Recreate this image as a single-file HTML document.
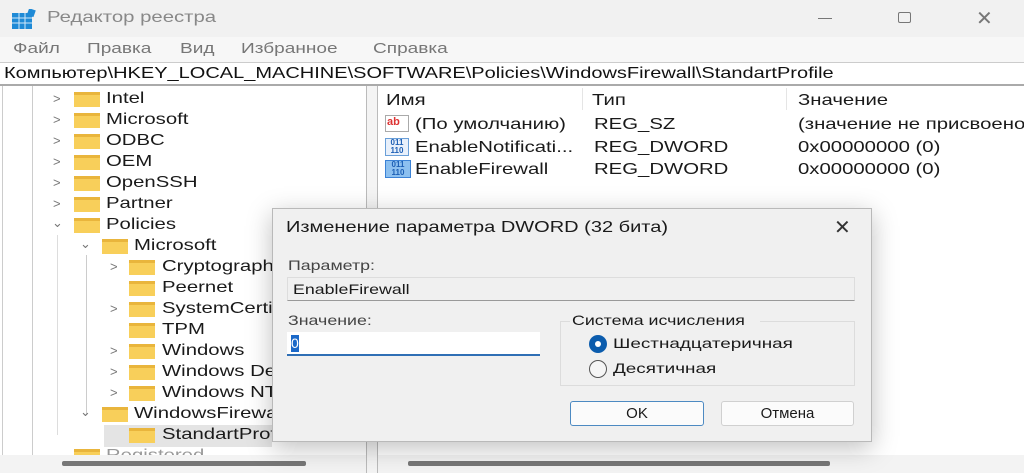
<!DOCTYPE html>
<html><head><meta charset="utf-8"><style>
*{margin:0;padding:0;box-sizing:border-box}
body{width:1024px;height:473px;overflow:hidden;background:#fff;font-family:"Liberation Sans","DejaVu Sans",sans-serif;color:#1a1a1a;position:relative}
.a{position:absolute;white-space:nowrap}
.x{transform:scaleX(1.27);transform-origin:0 0}
.t{font-size:16px}
.fold{position:absolute;width:26px;height:15px;background:#f8cf5a;border-top:3px solid #e9b53c}
.chev{position:absolute;font-size:13px;color:#777}
</style></head><body>
<!-- title -->
<div class="a" style="left:0;top:0;width:1024px;height:37px;background:#f1f1f1"></div>
<svg class="a" style="left:12px;top:9px" width="24" height="20"><rect x="0" y="4" width="20" height="16" fill="#1f8ad6"/><g stroke="#cfe8fa" stroke-width="1"><line x1="0" y1="9" x2="20" y2="9"/><line x1="0" y1="14" x2="20" y2="14"/><line x1="7" y1="4" x2="7" y2="20"/><line x1="13" y1="4" x2="13" y2="20"/></g><rect x="16" y="0" width="7" height="7" fill="#1f8ad6" transform="rotate(20 19 3)"/></svg>
<div class="a x" style="left:47px;top:9px;font-size:16px;color:#888">Редактор реестра</div>
<div class="a" style="left:818px;top:18px;width:14px;height:1px;background:#777"></div>
<div class="a" style="left:898px;top:12px;width:13px;height:11px;border:1px solid #777;border-radius:2px"></div>
<div class="a" style="left:976px;top:6px;font-size:20px;color:#777">✕</div>
<!-- menu -->
<div class="a" style="left:0;top:37px;width:1024px;height:25px;background:#f7f7f7"></div>
<div class="a x" style="left:13px;top:40px;font-size:15px;color:#777">Файл</div>
<div class="a x" style="left:87px;top:40px;font-size:15px;color:#777">Правка</div>
<div class="a x" style="left:180px;top:40px;font-size:15px;color:#777">Вид</div>
<div class="a x" style="left:241px;top:40px;font-size:15px;color:#777">Избранное</div>
<div class="a x" style="left:373px;top:40px;font-size:15px;color:#777">Справка</div>
<!-- address -->
<div class="a" style="left:0;top:62px;width:1024px;height:24px;border-top:1px solid #ccc;border-bottom:2px solid #aaa;background:#fff"></div>
<div class="a x" style="left:4px;top:65px;font-size:16px;color:#111;transform:scaleX(1.25)">Компьютер\HKEY_LOCAL_MACHINE\SOFTWARE\Policies\WindowsFirewall\StandartProfile</div>
<!-- tree lines -->
<div class="a" style="left:2px;top:86px;width:1px;height:370px;background:#ccc"></div>
<div class="a" style="left:32px;top:86px;width:1px;height:370px;background:#ccc"></div>
<div class="a" style="left:86px;top:255px;width:1px;height:160px;background:#ccc"></div>
<div class="a" style="left:57px;top:235px;width:1px;height:200px;background:#ddd"></div>
<div class="a" style="left:104px;top:425px;width:168px;height:22px;background:#e4e4e4"></div>
<!-- tree items -->
<div class="chev" style="left:53px;top:91px">&gt;</div><div class="fold" style="left:74px;top:92px"></div><div class="a t x" style="left:106px;top:90px">Intel</div>
<div class="chev" style="left:53px;top:112px">&gt;</div><div class="fold" style="left:74px;top:113px"></div><div class="a t x" style="left:106px;top:111px">Microsoft</div>
<div class="chev" style="left:53px;top:133px">&gt;</div><div class="fold" style="left:74px;top:134px"></div><div class="a t x" style="left:106px;top:132px">ODBC</div>
<div class="chev" style="left:53px;top:154px">&gt;</div><div class="fold" style="left:74px;top:155px"></div><div class="a t x" style="left:106px;top:153px">OEM</div>
<div class="chev" style="left:53px;top:175px">&gt;</div><div class="fold" style="left:74px;top:176px"></div><div class="a t x" style="left:106px;top:174px">OpenSSH</div>
<div class="chev" style="left:53px;top:196px">&gt;</div><div class="fold" style="left:74px;top:197px"></div><div class="a t x" style="left:106px;top:195px">Partner</div>
<div class="chev" style="left:52px;top:215px">⌄</div><div class="fold" style="left:74px;top:218px"></div><div class="a t x" style="left:106px;top:216px">Policies</div>
<div class="chev" style="left:80px;top:236px">⌄</div><div class="fold" style="left:102px;top:239px"></div><div class="a t x" style="left:134px;top:237px">Microsoft</div>
<div class="chev" style="left:110px;top:259px">&gt;</div><div class="fold" style="left:129px;top:260px"></div><div class="a t x" style="left:162px;top:258px">Cryptograph</div>
<div class="fold" style="left:129px;top:281px"></div><div class="a t x" style="left:162px;top:279px">Peernet</div>
<div class="chev" style="left:110px;top:301px">&gt;</div><div class="fold" style="left:129px;top:302px"></div><div class="a t x" style="left:162px;top:300px">SystemCertif</div>
<div class="fold" style="left:129px;top:323px"></div><div class="a t x" style="left:162px;top:321px">TPM</div>
<div class="chev" style="left:110px;top:343px">&gt;</div><div class="fold" style="left:129px;top:344px"></div><div class="a t x" style="left:162px;top:342px">Windows</div>
<div class="chev" style="left:110px;top:364px">&gt;</div><div class="fold" style="left:129px;top:365px"></div><div class="a t x" style="left:162px;top:363px">Windows De</div>
<div class="chev" style="left:110px;top:385px">&gt;</div><div class="fold" style="left:129px;top:386px"></div><div class="a t x" style="left:162px;top:384px">Windows NT</div>
<div class="chev" style="left:80px;top:404px">⌄</div><div class="fold" style="left:102px;top:407px"></div><div class="a t x" style="left:134px;top:405px">WindowsFirewa</div>
<div class="fold" style="left:129px;top:428px"></div><div class="a t x" style="left:162px;top:426px">StandartProf</div>
<div class="fold" style="left:74px;top:449px"></div><div class="a t x" style="left:106px;top:447px;color:#999">Registered</div>
<!-- splitter -->
<div class="a" style="left:366px;top:86px;width:12px;height:387px;border-left:1px solid #bbb;border-right:1px solid #bbb;background:#f4f4f4"></div>
<!-- right pane -->
<div class="a" style="left:378px;top:86px;width:646px;height:370px;background:#fff"></div>
<div class="a" style="left:582px;top:88px;width:1px;height:22px;background:#e5e5e5"></div>
<div class="a" style="left:786px;top:88px;width:1px;height:22px;background:#e5e5e5"></div>
<div class="a t x" style="left:386px;top:92px">Имя</div><div class="a t x" style="left:592px;top:92px">Тип</div><div class="a t x" style="left:798px;top:92px">Значение</div>
<div class="a" style="left:385px;top:115px;width:24px;height:17px;border:1px solid #aaa;background:#fff;font-size:11px;font-weight:bold;color:#d33;line-height:13px;padding-left:1px">ab</div>
<div class="a t x" style="left:415px;top:116px">(По умолчанию)</div><div class="a t x" style="left:594px;top:116px">REG_SZ</div><div class="a t x" style="left:798px;top:116px">(значение не присвоено)</div>
<div class="a" style="left:385px;top:138px;width:24px;height:18px;border:1px solid #6a9fd8;background:#e8f0fb;font-size:8px;color:#1c5fb5;line-height:8px;font-weight:bold;text-align:center">011<br>110</div>
<div class="a t x" style="left:415px;top:139px">EnableNotificati...</div><div class="a t x" style="left:594px;top:139px">REG_DWORD</div><div class="a t x" style="left:798px;top:139px">0x00000000 (0)</div>
<div class="a" style="left:385px;top:160px;width:26px;height:18px;border:1px solid #3b82d6;background:#8cc0f0;font-size:8px;color:#1c5fb5;line-height:8px;font-weight:bold;text-align:center">011<br>110</div>
<div class="a t x" style="left:415px;top:161px">EnableFirewall</div><div class="a t x" style="left:594px;top:161px">REG_DWORD</div><div class="a t x" style="left:798px;top:161px">0x00000000 (0)</div>
<!-- bottom scroll -->
<div class="a" style="left:0;top:455px;width:366px;height:18px;background:#f3f3f3"></div>
<div class="a" style="left:378px;top:455px;width:646px;height:18px;background:#f3f3f3"></div>
<div class="a" style="left:62px;top:461px;width:244px;height:5px;background:#777;border-radius:2px"></div>
<div class="a" style="left:408px;top:461px;width:422px;height:5px;background:#777;border-radius:2px"></div>
<!-- dialog -->
<div class="a" style="left:272px;top:208px;width:600px;height:234px;background:#f0f0f0;border:1px solid #b9b9b9;box-shadow:0 6px 24px rgba(0,0,0,.25)"></div>
<div class="a x" style="left:286px;top:219px;font-size:16px;transform:scaleX(1.25)">Изменение параметра DWORD (32 бита)</div>
<div class="a" style="left:834px;top:215px;font-size:20px;color:#333">✕</div>
<div class="a x" style="left:288px;top:257px;font-size:14px;color:#444">Параметр:</div>
<div class="a" style="left:287px;top:277px;width:568px;height:24px;background:#f0f0f0;border:1px solid #ddd;border-bottom:1px solid #999"></div>
<div class="a x" style="left:293px;top:281px;font-size:14px">EnableFirewall</div>
<div class="a x" style="left:288px;top:312px;font-size:14px;color:#444">Значение:</div>
<div class="a" style="left:287px;top:332px;width:253px;height:24px;background:#fff;border-bottom:2px solid #2f6fb5"></div>
<div class="a" style="left:291px;top:335px;width:8px;height:17px;background:#1a68c8;color:#fff;font-size:14px;line-height:17px">0</div>
<div class="a" style="left:560px;top:321px;width:295px;height:65px;border:1px solid #dcdcdc"></div>
<div class="a" style="left:570px;top:312px;width:190px;height:18px;background:#f0f0f0"></div>
<div class="a x" style="left:572px;top:312px;font-size:14px">Система исчисления</div>
<div class="a" style="left:589px;top:335px;width:18px;height:18px;border-radius:50%;background:#0b5cad"></div>
<div class="a" style="left:595px;top:341px;width:6px;height:6px;border-radius:50%;background:#fff"></div>
<div class="a x" style="left:613px;top:335px;font-size:14px;transform:scaleX(1.35)">Шестнадцатеричная</div>
<div class="a" style="left:589px;top:360px;width:18px;height:18px;border-radius:50%;border:1px solid #555;background:#f5f5f5"></div>
<div class="a x" style="left:613px;top:360px;font-size:14px;transform:scaleX(1.35)">Десятичная</div>
<div class="a" style="left:570px;top:401px;width:134px;height:25px;border:1px solid #4d8ac2;border-radius:3px;background:#fbfbfb;font-size:15px;text-align:center;line-height:23px">OK</div>
<div class="a" style="left:721px;top:401px;width:133px;height:25px;border:1px solid #d0d0d0;border-radius:3px;background:#fbfbfb;font-size:15px;text-align:center;line-height:23px">Отмена</div>
</body></html>
